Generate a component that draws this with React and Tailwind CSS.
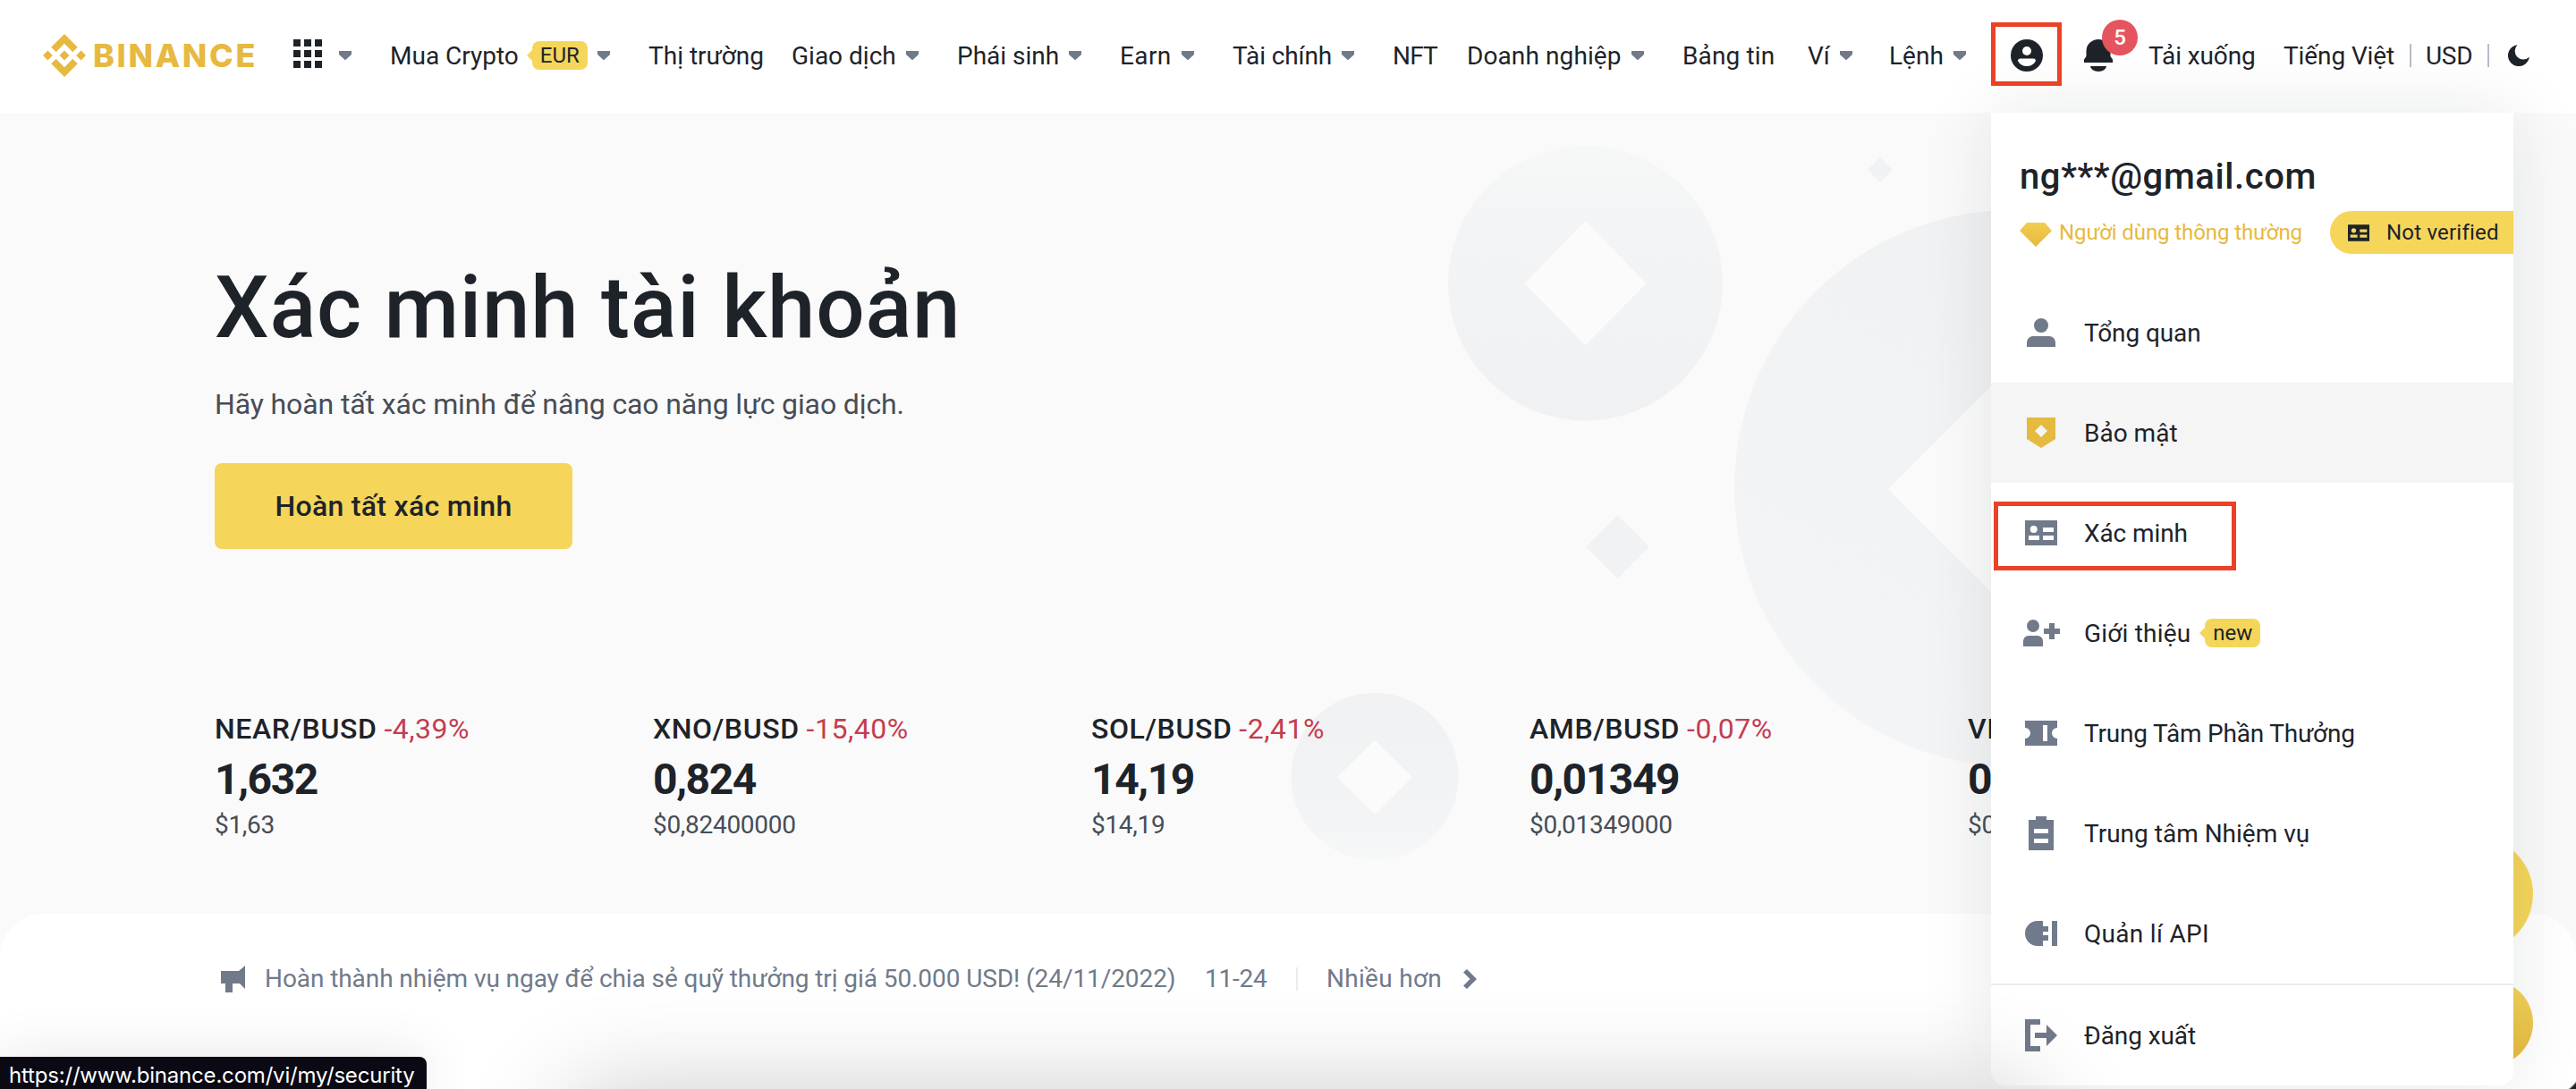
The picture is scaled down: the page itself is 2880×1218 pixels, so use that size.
const NAV = [
  { label: 'Mua Crypto', box: 'w-[289px]', badge: 'EUR', caret: true },
  { label: 'Thị trường', box: 'w-[160px]' },
  { label: 'Giao dịch', box: 'w-[185px]', caret: true },
  { label: 'Phái sinh', box: 'w-[182px]', caret: true },
  { label: 'Earn', box: 'w-[126px] tracking-[0.4px]', caret: true },
  { label: 'Tài chính', box: 'w-[179px] tracking-[-0.1px]', caret: true },
  { label: 'NFT', box: 'w-[83px] tracking-[-0.8px]' },
  { label: 'Doanh nghiệp', box: 'w-[241px] tracking-[0.1px]', caret: true },
  { label: 'Bảng tin', box: 'w-[140px] tracking-[0.15px]' },
  { label: 'Ví', box: 'w-[91px]', caret: true },
  { label: 'Lệnh', box: 'w-[136px]', caret: true },
];

const TICKERS = [
  { pair: 'NEAR/BUSD', change: '-4,39%', price: '1,632', usd: '$1,63' },
  { pair: 'XNO/BUSD', change: '-15,40%', price: '0,824', usd: '$0,82400000' },
  { pair: 'SOL/BUSD', change: '-2,41%', price: '14,19', usd: '$14,19' },
  { pair: 'AMB/BUSD', change: '-0,07%', price: '0,01349', usd: '$0,01349000' },
  { pair: 'VI', change: '', price: '0', usd: '$0' },
];

const MENU = [
  { label: 'Tổng quan', icon: PersonIcon, track: 'tracking-[-0.1px]' },
  { label: 'Bảo mật', icon: ShieldIcon, active: true },
  { label: 'Xác minh', icon: IdCardIcon, marked: true, track: 'tracking-[-0.1px]' },
  { label: 'Giới thiệu', icon: PersonAddIcon, badge: 'new', track: 'tracking-[0.2px]' },
  { label: 'Trung Tâm Phần Thưởng', icon: TicketIcon, track: 'tracking-[-0.2px]' },
  { label: 'Trung tâm Nhiệm vụ', icon: ClipboardIcon },
  { label: 'Quản lí API', icon: PlugIcon, track: 'tracking-[0.3px]' },
];

function Caret() {
  return (
    <svg width="14" height="10" viewBox="0 0 14 10" className="shrink-0 fill-[#707a8a]">
      <path d="M0 0h14v4L7 10.3 0 4z" />
    </svg>
  );
}

function LogoMark() {
  return (
    <svg width="48" height="48" viewBox="0 0 126.61 126.61" className="fill-[#e6b93f]">
      <path d="M38.73 53.2l24.59-24.58 24.6 24.6 14.3-14.31L63.32 0l-38.9 38.9z" />
      <path d="M0 63.31L14.3 49l14.31 14.31-14.31 14.3z" />
      <path d="M38.73 73.41L63.32 98l24.6-24.6 14.31 14.29-38.9 38.91-38.91-38.88z" />
      <path d="M98 63.31L112.3 49l14.31 14.3-14.31 14.32z" />
      <path d="M77.83 63.3L63.32 48.78 48.81 63.28l14.51 14.5z" />
    </svg>
  );
}

function AvatarIcon() {
  return (
    <svg width="36" height="36" viewBox="0 0 36 36">
      <circle cx="18" cy="18" r="18" fill="#1e2329" />
      <circle cx="18" cy="13" r="5" fill="#fff" />
      <path d="M8 24c0-1.6 1-2.6 2.6-2.6h14.8c1.6 0 2.6 1 2.6 2.6C26 28 22.5 30 18 30S10 28 8 24z" fill="#fff" />
    </svg>
  );
}

function BellIcon() {
  return (
    <svg width="32" height="36" viewBox="0 0 32 36" className="fill-[#1e2329]">
      <path d="M0 26v-3.5L2.500 19v-6a13.500 13 0 0 1 27 0v6l2.500 3.500V26z" />
      <path d="M7 30h18a9 6 0 0 1-18 0z" />
    </svg>
  );
}

function MoonIcon() {
  return (
    <svg width="24" height="24" viewBox="0 0 24 24" className="fill-[#1e2329]">
      <path d="M10.5 .2A12 12 0 1 0 23.8 13.8 9.5 9.5 0 0 1 10.5 .2z" />
    </svg>
  );
}

function PersonIcon() {
  return (
    <svg width="32" height="32" viewBox="0 0 32 32" fill="#707a8a">
      <circle cx="16" cy="8" r="8" />
      <path d="M0 32v-5a7 7 0 0 1 7-7h18a7 7 0 0 1 7 7v5z" />
    </svg>
  );
}

function ShieldIcon() {
  return (
    <svg width="32" height="34" viewBox="0 0 32 34" fill="#e6b93f">
      <path fillRule="evenodd" d="M0 0h32v24L16 34 0 24zM16 8l-7 7 7 7 7-7z" />
    </svg>
  );
}

function IdCardIcon({ className = 'w-9 h-7 fill-[#707a8a]' }) {
  return (
    <svg viewBox="0 0 36 28" className={className}>
      <path
        fillRule="evenodd"
        d="M0 0h36v28H0zM9.7 6a4 4 0 1 0 0 8 4 4 0 0 0 0-8zM20 8v5h12V8zM4 17v5h12v-5zM20 17v5h12v-5z"
      />
    </svg>
  );
}

function PersonAddIcon() {
  return (
    <svg width="41" height="30" viewBox="0 0 41 30" fill="#707a8a" className="shrink-0">
      <circle cx="11" cy="7" r="7" />
      <path d="M0 30v-6a6 6 0 0 1 6-6h10a6 6 0 0 1 6 6v6z" />
      <path d="M29 4h6v6h6v6h-6v6h-6v-6h-6v-6h6z" />
    </svg>
  );
}

function TicketIcon() {
  return (
    <svg width="36" height="28" viewBox="0 0 36 28" fill="#707a8a">
      <path fillRule="evenodd" d="M0 0h36v8a6 6 0 0 0 0 12v8H0v-8a6 6 0 0 0 0-12zM20 5v18h5V5z" />
    </svg>
  );
}

function ClipboardIcon() {
  return (
    <svg width="28" height="38" viewBox="0 0 28 38" fill="#707a8a">
      <path fillRule="evenodd" d="M8 0h12v4h8v34H0V4h8zM6 14v5h16v-5zM6 25v5h16v-5z" />
    </svg>
  );
}

function PlugIcon() {
  return (
    <svg width="36" height="28" viewBox="0 0 36 28" fill="#707a8a">
      <path d="M14 0h6v6h6v6h-6v4h6v6h-6v6h-6a14 14 0 0 1 0-28z" />
      <path d="M30 0h6v28h-6z" />
    </svg>
  );
}

function LogoutIcon() {
  return (
    <svg width="36" height="36" viewBox="0 0 36 36" fill="#707a8a">
      <path d="M0 0h17v6H6v24h11v6H0z" />
      <path d="M11 15h13V6l12 12-12 12v-9H11z" />
    </svg>
  );
}

function Tag({ children }) {
  return (
    <span className="flex items-center">
      <svg width="6" height="12" viewBox="0 0 6 12" className="fill-[#f5d65a]">
        <path d="M6 0v12L0 6z" />
      </svg>
      <span className="flex h-8 items-center rounded-lg bg-[#f5d65a] px-[9px] text-2xl leading-8 tracking-normal">
        {children}
      </span>
    </span>
  );
}

function Header() {
  return (
    <header className="flex h-[126px] shrink-0 items-center bg-white pb-[2px] pl-12 text-[28px] leading-9 whitespace-nowrap">
      <LogoMark />
      <span className="ml-2 w-[224px] font-[Inter] text-[36px] font-extrabold tracking-[2.6px] text-[#e6b93f]">
        BINANCE
      </span>
      <div className="mt-[-4px] grid grid-cols-3 gap-1">
        {[...Array(9)].map((_, i) => (
          <span key={i} className="size-2 bg-[#1e2329]" />
        ))}
      </div>
      <div className="ml-[19px] flex w-[57px]">
        <Caret />
      </div>
      <nav className="flex">
        {NAV.map((item) => (
          <a key={item.label} className={`flex shrink-0 items-center ${item.box}`}>
            <span className="pt-px">{item.label}</span>
            {item.badge && (
              <span className="ml-[9px]">
                <Tag>{item.badge}</Tag>
              </span>
            )}
            {item.caret && (
              <span className="ml-[11px]">
                <Caret />
              </span>
            )}
          </a>
        ))}
      </nav>
      <AvatarIcon />
      <div className="relative ml-[46px]">
        <BellIcon />
        <span className="absolute -top-[22px] left-5 flex size-10 items-center justify-center rounded-full bg-[#e55560] text-2xl font-medium text-white">
          5
        </span>
      </div>
      <span className="ml-10 w-[151px] pt-px tracking-[-0.1px]">Tải xuống</span>
      <span className="w-[141px] pt-px tracking-[-0.1px]">Tiếng Việt</span>
      <span className="h-[26px] w-[2px] bg-[#b7bdc6]" />
      <span className="ml-[16px] w-[69px] pt-px tracking-[-0.3px]">USD</span>
      <span className="mr-[21px] h-[26px] w-[2px] bg-[#b7bdc6]" />
      <MoonIcon />
    </header>
  );
}

function Coins() {
  return (
    <svg width="2880" height="896" viewBox="0 126 2880 896" className="absolute top-0 left-0">
      <defs>
        <linearGradient id="fadeUp" x1="0" y1="0" x2="0" y2="1">
          <stop offset="0" stopColor="#f6f7f7" />
          <stop offset=".3" stopColor="#f3f4f5" />
          <stop offset="1" stopColor="#f0f1f3" />
        </linearGradient>
        <linearGradient id="fadeDown" x1="0" y1="0" x2="0" y2="1">
          <stop offset="0" stopColor="#f0f1f3" />
          <stop offset=".75" stopColor="#f3f4f5" />
          <stop offset="1" stopColor="#f6f7f7" />
        </linearGradient>
        <linearGradient id="fadeSide" x1="0" y1="1" x2=".6" y2="0">
          <stop offset="0" stopColor="#f4f5f6" />
          <stop offset="1" stopColor="#f0f1f3" />
        </linearGradient>
      </defs>
      <circle cx="1772.5" cy="317" r="153.500" fill="url(#fadeUp)" />
      <path d="M1772.5 247l68 70-68 69-68-69z" fill="#fbfbfb" />
      <circle cx="2250" cy="546" r="311" fill="url(#fadeSide)" />
      <path d="M2250 408l139 139-139 139-139-139z" fill="#fbfbfb" />
      <circle cx="1537" cy="868.5" r="93.500" fill="url(#fadeDown)" />
      <path d="M1537 828l42 41-42 42-42-42z" fill="#fbfbfb" />
      <path d="M2102 176l14 14-14 14-14-14z" fill="#f1f2f3" />
      <path d="M1808.5 576l35.500 35.500-35.500 35.500-35.500-35.500z" fill="#f1f2f3" />
    </svg>
  );
}

function Hero() {
  return (
    <section className="relative h-[896px] shrink-0 overflow-hidden pt-[170px] pl-[240px]">
      <Coins />
      <div className="relative">
        <h1 className="text-[96px] leading-[96px] font-medium tracking-[0.78px]">Xác minh tài khoản</h1>
        <p className="mt-9 text-[32px] leading-[48px] tracking-[-0.12px] text-[#474d57]">
          Hãy hoàn tất xác minh để nâng cao năng lực giao dịch.
        </p>
        <button className="mt-[42px] flex h-24 w-[400px] items-center justify-center rounded-lg bg-[#f5d65a] text-[32px] font-medium tracking-[0.3px]">
          Hoàn tất xác minh
        </button>
        <div className="mt-[181px] flex">
          {TICKERS.map((t) => (
            <div key={t.pair} className="w-[490px] shrink-0 whitespace-nowrap">
              <div className="text-[32px] leading-10">
                <span className="font-medium tracking-[0.6px]">{t.pair}</span>{' '}
                <span className="tracking-[0.5px] text-[#c43d4e]">{t.change}</span>
              </div>
              <div className="mt-[9px] text-[48px] leading-[56px] font-bold tracking-[-1.4px]">{t.price}</div>
              <div className="mt-[5px] text-[28px] leading-9 tracking-[-0.3px] text-[#474d57]">{t.usd}</div>
            </div>
          ))}
        </div>
      </div>
    </section>
  );
}

function News() {
  return (
    <section className="flex flex-1 rounded-t-[48px] bg-white pt-[53px] pl-[247px] text-[28px] leading-10 whitespace-nowrap text-[#707a8a]">
      <div className="flex h-10 items-center">
        <svg width="27" height="30" viewBox="0 0 27 30" className="fill-[#707a8a]">
          <path d="M0 6h20l7-6v26l-6-6h-8v10H5V20H0z" />
        </svg>
        <span className="ml-[22px] w-[1051px] tracking-[-0.08px]">
          Hoàn thành nhiệm vụ ngay để chia sẻ quỹ thưởng trị giá 50.000 USD! (24/11/2022)
        </span>
        <span className="w-[102px] tracking-[-0.24px]">11-24</span>
        <span className="h-[26px] w-[2px] bg-[#eaecef]" />
        <span className="ml-8 tracking-[0.3px]">Nhiều hơn</span>
        <svg width="15" height="22" viewBox="0 0 15 22" className="ml-6 fill-[#707a8a]">
          <path d="M0 3.5L4 0l11 11L4 22l-4-3.500L7.500 11z" />
        </svg>
      </div>
    </section>
  );
}

function MenuRow({ item }) {
  const Icon = item.icon;
  return (
    <a className={`relative flex h-28 items-center pl-[38px] text-[28px] ${item.active ? 'bg-[#f5f5f5]' : ''}`}>
      <span className="flex w-9 justify-center">
        <Icon />
      </span>
      <span className={`ml-[30px] pt-[2px] ${item.track || ''}`}>{item.label}</span>
      {item.badge && (
        <span className="ml-[10px]">
          <Tag>{item.badge}</Tag>
        </span>
      )}
      {item.marked && <span className="absolute top-[21px] left-[3px] h-[77px] w-[271px] border-[5px] border-[#eb4126]" />}
    </a>
  );
}

function AccountMenu() {
  return (
    <div className="absolute top-[126px] left-[2226px] w-[584px] overflow-hidden rounded-b-2xl bg-white whitespace-nowrap">
      <div className="pt-12 pb-8">
        <div className="pl-8 text-[40px] leading-[48px] font-medium tracking-[0.6px]">ng***@gmail.com</div>
        <div className="mt-[14px] flex h-12 items-center pl-8 text-2xl">
          <svg width="36" height="27" viewBox="0 0 36 27" className="mt-[5px]">
            <defs>
              <linearGradient id="gem" x1="0" y1="0" x2="0" y2="1">
                <stop offset="0" stopColor="#f2ce4f" />
                <stop offset="1" stopColor="#e6b93f" />
              </linearGradient>
            </defs>
            <path d="M8 0h20l8 9-18 18L0 9z" fill="url(#gem)" />
          </svg>
          <span className="ml-2 w-[303px] tracking-[-0.1px] text-[#e6b93f]">Người dùng thông thường</span>
          <span className="flex h-12 flex-1 items-center rounded-l-3xl bg-[#f5d65a] pl-5">
            <IdCardIcon className="h-[19px] w-6 fill-[#1e2329]" />
            <span className="ml-[19px] tracking-[0.2px]">Not verified</span>
          </span>
        </div>
      </div>
      {MENU.map((item) => (
        <MenuRow key={item.label} item={item} />
      ))}
      <div className="border-t-2 border-[#eaecef]">
        <MenuRow item={{ label: 'Đăng xuất', icon: LogoutIcon, track: 'tracking-[-0.1px]' }} />
      </div>
    </div>
  );
}

export default function App() {
  return (
    <div className="relative flex h-[1218px] w-[2880px] flex-col overflow-hidden bg-[#fafafa] font-[Roboto,sans-serif] text-[#1e2329]">
      <Header />
      <Hero />
      <News />

      {/* floating action buttons, mostly hidden by the account menu */}
      <span className="absolute top-[936px] left-[2704px] size-32 rounded-full bg-[#f5d65a]" />
      <span className="absolute top-[1096px] left-[2736px] size-24 rounded-full bg-linear-to-b from-[#f5d65a] to-[#e6b93f]" />

      <div className="absolute top-[126px] left-[2226px] h-[1088px] w-[584px] rounded-b-2xl shadow-[0_0_80px_rgba(24,26,32,0.1)]" />
      <AccountMenu />
      <span className="absolute top-[25px] left-[2226px] h-[71px] w-[79px] border-[5px] border-[#eb4126]" />

      {/* shadow of the window below */}
      <div className="absolute top-[1228px] left-[640px] h-40 w-[1630px] shadow-[0_0_120px_rgba(0,0,0,0.24)]" />
      <div className="absolute right-0 bottom-0 size-[14px] bg-[radial-gradient(circle_at_-20px_-20px,transparent_42px,#222_44px)]" />

      <div className="absolute bottom-0 left-0 h-9 rounded-tr-lg bg-[#0b0a14] pt-[3px] pr-[14px] pl-[10px] font-[Inter] text-2xl leading-9 tracking-[-0.19px] text-white shadow-[0_0_60px_rgba(0,0,0,0.12)]">
        https://www.binance.com/vi/my/security
      </div>
    </div>
  );
}
